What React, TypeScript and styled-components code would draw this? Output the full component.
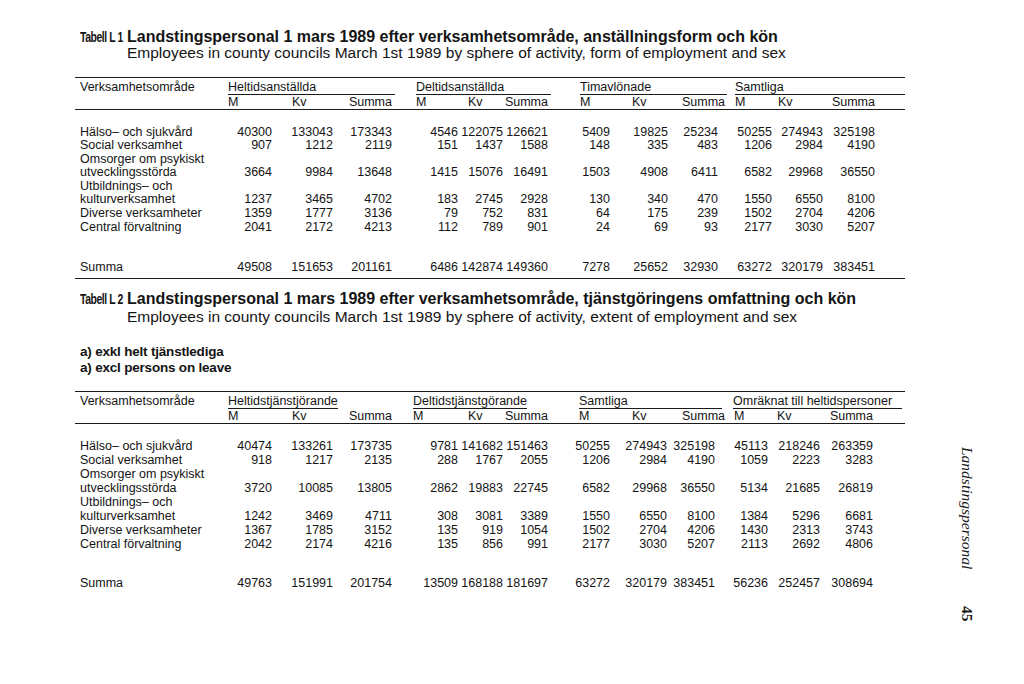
import React from "react";
import styled, { createGlobalStyle } from "styled-components";

const GlobalStyle = createGlobalStyle`
  html, body { margin: 0; padding: 0; background: #ffffff; }
  body {
    width: 1024px;
    height: 684px;
    overflow: hidden;
    color: #141414;
    font-family: "Liberation Sans", Arial, sans-serif;
  }
`;

const Page = styled.div`
  display: flex;
  width: 1024px;
  height: 684px;
  box-sizing: border-box;
  padding: 29px 0 0 75px;
`;

const Main = styled.main`
  width: 830px;
  display: flex;
  flex-direction: column;
`;

const Caption = styled.div<{ $lh: number; $mt: number }>`
  display: grid;
  grid-template-columns: 42px 1fr;
  column-gap: 5px;
  padding-left: 5px;
  margin-top: ${(p) => p.$mt}px;
  line-height: ${(p) => p.$lh}px;
  white-space: nowrap;
`;

const TableNo = styled.span`
  display: inline-block;
  font-size: 14.5px;
  font-weight: bold;
  letter-spacing: -0.6px;
  transform: scaleX(0.72);
  transform-origin: left center;
`;

const TitleMain = styled.span`
  font-size: 16px;
  font-weight: bold;
`;

const TitleSub = styled.span`
  grid-column: 2;
  font-size: 15.5px;
  font-weight: normal;
`;

const Note = styled.div<{ $mt: number }>`
  display: flex;
  flex-direction: column;
  padding-left: 5px;
  margin-top: ${(p) => p.$mt}px;
  font-size: 13.5px;
  line-height: 16px;
  font-weight: bold;
  letter-spacing: -0.2px;
`;

const Rule = styled.div<{ $mt: number }>`
  border-top: 1px solid #1a1a1a;
  margin-top: ${(p) => p.$mt}px;
`;

const Grid = styled.div<{ $cols: string; $lh: number; $mt: number }>`
  display: grid;
  grid-template-columns: ${(p) => p.$cols};
  margin-top: ${(p) => p.$mt}px;
  font-size: 12.5px;
  line-height: ${(p) => p.$lh}px;
  white-space: nowrap;
`;

const HeaderGrid = styled(Grid)`
  padding-top: 2px;
`;

const Label = styled.div<{ $row?: number }>`
  grid-column: 1;
  ${(p) => (p.$row ? `grid-row: ${p.$row};` : "")}
  padding-left: 5px;
`;

const GroupHead = styled.div<{ $col: number; $span: number; $ml: number; $mr: number; $fit?: boolean }>`
  grid-row: 1;
  grid-column: ${(p) => p.$col} / span ${(p) => p.$span};
  margin-left: ${(p) => p.$ml}px;
  margin-right: ${(p) => p.$mr}px;
  justify-self: ${(p) => (p.$fit ? "start" : "stretch")};
  border-bottom: 1px solid #1a1a1a;
`;

const SubHead = styled.div<{ $col: number; $ml: number; $right?: boolean }>`
  grid-row: 2;
  grid-column: ${(p) => p.$col};
  padding-left: ${(p) => p.$ml}px;
  text-align: ${(p) => (p.$right ? "right" : "left")};
`;

const Num = styled.div`
  text-align: right;
  align-self: end;
`;

const Margin = styled.aside`
  display: flex;
  flex-direction: column;
  align-items: center;
  width: 24px;
  margin-left: 50px;
  padding-top: 418px;
  gap: 37px;
  font-family: "Liberation Serif", "Times New Roman", serif;
  font-size: 15.5px;
  line-height: 20px;
  color: #1a1a1a;
`;

const RunningHead = styled.div`
  writing-mode: vertical-rl;
  font-style: italic;
`;

const Folio = styled.div`
  writing-mode: vertical-rl;
  font-weight: bold;
`;

type Group = { label: string; col: number; span: number; ml: number; mr: number; fit?: boolean };
type Sub = { t: string; col: number; ml: number; right?: boolean };
type Row = { label: string[]; nums: number[] };

const cols1 = "153px 44px 61px 59px 66px 45px 45px 62px 58px 50px 54px 51px 52px 30px";
const cols2 = "153px 44px 61px 59px 66px 45px 45px 62px 57px 48px 53px 52px 53px 32px";

const groups1: Group[] = [
  { label: "Heltidsanställda", col: 2, span: 3, ml: 0, mr: -3 },
  { label: "Deltidsanställda", col: 5, span: 3, ml: 24, mr: -3 },
  { label: "Timavlönade", col: 8, span: 3, ml: 32, mr: -9 },
  { label: "Samtliga", col: 11, span: 4, ml: 17, mr: 0 },
];

const subs1: Sub[] = [
  { t: "M", col: 2, ml: 0 },
  { t: "Kv", col: 3, ml: 20 },
  { t: "Summa", col: 4, ml: 0, right: true },
  { t: "M", col: 5, ml: 24 },
  { t: "Kv", col: 6, ml: 10 },
  { t: "Summa", col: 7, ml: 0, right: true },
  { t: "M", col: 8, ml: 32 },
  { t: "Kv", col: 9, ml: 22 },
  { t: "Summa", col: 10, ml: 14 },
  { t: "M", col: 11, ml: 17 },
  { t: "Kv", col: 12, ml: 6 },
  { t: "Summa", col: 13, ml: 0, right: true },
];

const groups2: Group[] = [
  { label: "Heltidstjänstjörande", col: 2, span: 3, ml: 0, mr: 0, fit: true },
  { label: "Deltidstjänstgörande", col: 5, span: 3, ml: 21, mr: 0, fit: true },
  { label: "Samtliga", col: 8, span: 3, ml: 31, mr: -7 },
  { label: "Omräknat till heltidspersoner", col: 11, span: 4, ml: 18, mr: 3 },
];

const subs2: Sub[] = [
  { t: "M", col: 2, ml: 0 },
  { t: "Kv", col: 3, ml: 20 },
  { t: "Summa", col: 4, ml: 0, right: true },
  { t: "M", col: 5, ml: 21 },
  { t: "Kv", col: 6, ml: 10 },
  { t: "Summa", col: 7, ml: 0, right: true },
  { t: "M", col: 8, ml: 31 },
  { t: "Kv", col: 9, ml: 22 },
  { t: "Summa", col: 10, ml: 15 },
  { t: "M", col: 11, ml: 19 },
  { t: "Kv", col: 12, ml: 9 },
  { t: "Summa", col: 13, ml: 0, right: true },
];

const labels = [
  ["Hälso– och sjukvård"],
  ["Social verksamhet"],
  ["Omsorger om psykiskt", "utvecklingsstörda"],
  ["Utbildnings– och", "kulturverksamhet"],
  ["Diverse verksamheter"],
  ["Central förvaltning"],
];

const data1: number[][] = [
  [40300, 133043, 173343, 4546, 122075, 126621, 5409, 19825, 25234, 50255, 274943, 325198],
  [907, 1212, 2119, 151, 1437, 1588, 148, 335, 483, 1206, 2984, 4190],
  [3664, 9984, 13648, 1415, 15076, 16491, 1503, 4908, 6411, 6582, 29968, 36550],
  [1237, 3465, 4702, 183, 2745, 2928, 130, 340, 470, 1550, 6550, 8100],
  [1359, 1777, 3136, 79, 752, 831, 64, 175, 239, 1502, 2704, 4206],
  [2041, 2172, 4213, 112, 789, 901, 24, 69, 93, 2177, 3030, 5207],
];
const total1 = [49508, 151653, 201161, 6486, 142874, 149360, 7278, 25652, 32930, 63272, 320179, 383451];

const data2: number[][] = [
  [40474, 133261, 173735, 9781, 141682, 151463, 50255, 274943, 325198, 45113, 218246, 263359],
  [918, 1217, 2135, 288, 1767, 2055, 1206, 2984, 4190, 1059, 2223, 3283],
  [3720, 10085, 13805, 2862, 19883, 22745, 6582, 29968, 36550, 5134, 21685, 26819],
  [1242, 3469, 4711, 308, 3081, 3389, 1550, 6550, 8100, 1384, 5296, 6681],
  [1367, 1785, 3152, 135, 919, 1054, 1502, 2704, 4206, 1430, 2313, 3743],
  [2042, 2174, 4216, 135, 856, 991, 2177, 3030, 5207, 2113, 2692, 4806],
];
const total2 = [49763, 151991, 201754, 13509, 168188, 181697, 63272, 320179, 383451, 56236, 252457, 308694];

const rows = (data: number[][]): Row[] => data.map((nums, i) => ({ label: labels[i], nums }));

function DataRows({ items }: { items: Row[] }) {
  return (
    <>
      {items.map((r, i) => (
        <React.Fragment key={i}>
          <Label>
            {r.label.map((l, j) => (
              <div key={j}>{l}</div>
            ))}
          </Label>
          {r.nums.map((n, j) => (
            <Num key={j}>{n}</Num>
          ))}
        </React.Fragment>
      ))}
    </>
  );
}

type TableProps = {
  no: string;
  title: string;
  subtitle: string;
  captionMt: number;
  captionLh: number;
  notes?: string[];
  ruleMt: number;
  cols: string;
  groups: Group[];
  subs: Sub[];
  body: Row[];
  total: number[];
  headLh: number;
  bodyLh: number;
  bodyMt: number;
  totalMt: number;
  bottomRule?: boolean;
};

function StatTable(p: TableProps) {
  return (
    <>
      <Caption $mt={p.captionMt} $lh={p.captionLh}>
        <TableNo>{p.no}</TableNo>
        <TitleMain>{p.title}</TitleMain>
        <TitleSub>{p.subtitle}</TitleSub>
      </Caption>
      {p.notes && (
        <Note $mt={18.5}>
          {p.notes.map((n) => (
            <span key={n}>{n}</span>
          ))}
        </Note>
      )}
      <Rule $mt={p.ruleMt} />
      <HeaderGrid $cols={p.cols} $lh={p.headLh} $mt={0}>
        <Label $row={1}>Verksamhetsområde</Label>
        {p.groups.map((g) => (
          <GroupHead key={g.label} $col={g.col} $span={g.span} $ml={g.ml} $mr={g.mr} $fit={g.fit}>
            {g.label}
          </GroupHead>
        ))}
        {p.subs.map((s, i) => (
          <SubHead key={i} $col={s.col} $ml={s.ml} $right={s.right}>
            {s.t}
          </SubHead>
        ))}
      </HeaderGrid>
      <Rule $mt={0} />
      <Grid $cols={p.cols} $lh={p.bodyLh} $mt={p.bodyMt}>
        <DataRows items={p.body} />
      </Grid>
      <Grid $cols={p.cols} $lh={p.bodyLh} $mt={p.totalMt}>
        <DataRows items={[{ label: ["Summa"], nums: p.total }]} />
      </Grid>
      {p.bottomRule && <Rule $mt={3} />}
    </>
  );
}

export default function App() {
  return (
    <>
      <GlobalStyle />
      <Page>
        <Main>
          <StatTable
            no="Tabell L 1"
            title="Landstingspersonal 1 mars 1989 efter verksamhetsområde, anställningsform och kön"
            subtitle="Employees in county councils March 1st 1989 by sphere of activity, form of employment and sex"
            captionMt={0}
            captionLh={16}
            ruleMt={16}
            cols={cols1}
            groups={groups1}
            subs={subs1}
            body={rows(data1)}
            total={total1}
            headLh={14}
            bodyLh={13.6}
            bodyMt={15.5}
            totalMt={27}
            bottomRule
          />
          <StatTable
            no="Tabell L 2"
            title="Landstingspersonal 1 mars 1989 efter verksamhetsområde, tjänstgöringens omfattning och kön"
            subtitle="Employees in county councils March 1st 1989 by sphere of activity, extent of employment and sex"
            captionMt={11}
            captionLh={18}
            notes={["a) exkl helt tjänstlediga", "a) excl persons on leave"]}
            ruleMt={14.5}
            cols={cols2}
            groups={groups2}
            subs={subs2}
            body={rows(data2)}
            total={total2}
            headLh={14.2}
            bodyLh={14}
            bodyMt={14.5}
            totalMt={25}
          />
        </Main>
        <Margin>
          <RunningHead>Landstingspersonal</RunningHead>
          <Folio>45</Folio>
        </Margin>
      </Page>
    </>
  );
}
